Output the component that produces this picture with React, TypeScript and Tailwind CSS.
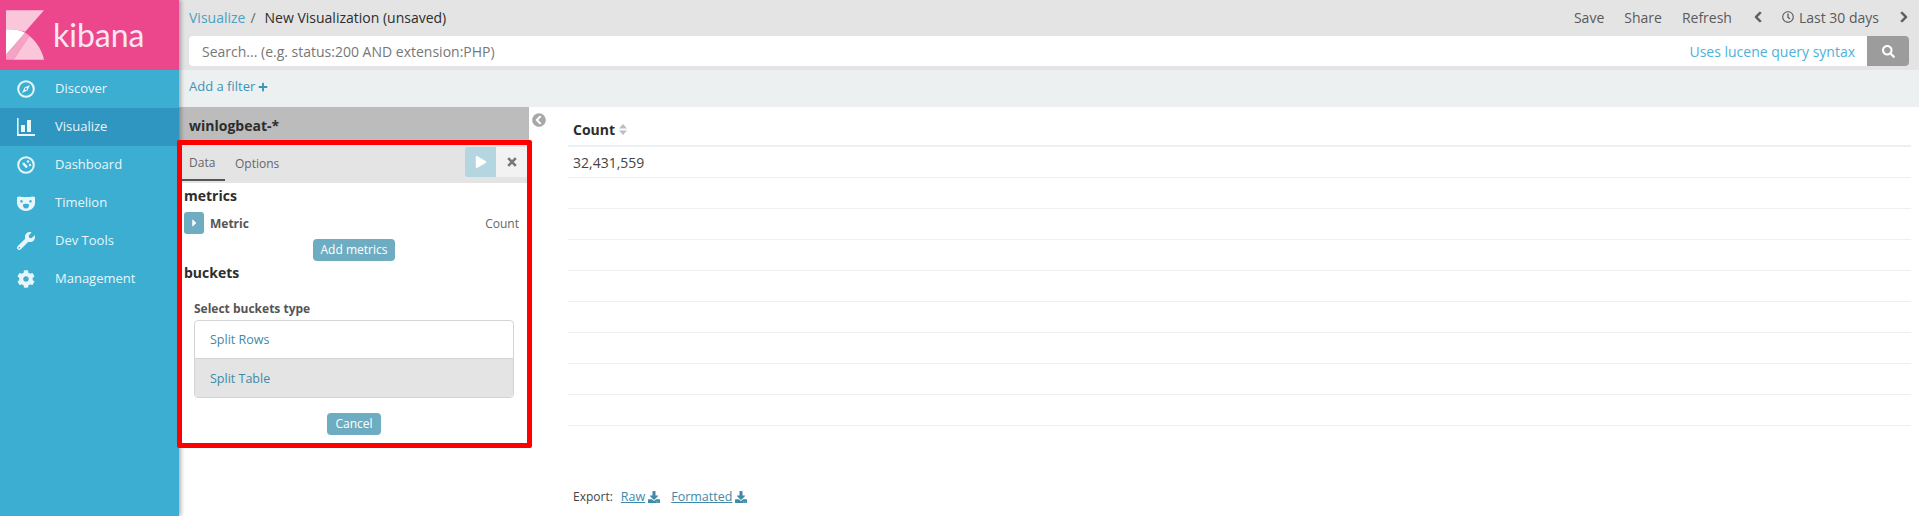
import { FaChevronCircleLeft, FaCaretRight, FaDownload, FaPlay, FaPlus, FaSearch, FaWrench, FaCog, FaRegClock, FaChevronLeft, FaChevronRight } from 'react-icons/fa';

function CompassIcon() {
  return (
    <svg viewBox="0 0 18 18" className="w-[18px] h-[18px]">
      <circle cx="9" cy="9" r="7.8" fill="none" stroke="currentColor" strokeWidth="2" />
      <path d="M13 5 L10.5 10.5 L5 13 L7.5 7.5 Z M9 8 a1 1 0 1 0 .01 0Z" fill="currentColor" fillRule="evenodd" />
    </svg>
  );
}

function ChartIcon() {
  return (
    <svg viewBox="0 0 18 18" className="w-[18px] h-[18px]" fill="currentColor">
      <path d="M0 0h1.6v16H18v2H0Z" />
      <rect x="4" y="7" width="4" height="7" />
      <rect x="10" y="2" width="4" height="12" />
    </svg>
  );
}

function GaugeIcon() {
  return (
    <svg viewBox="0 0 18 18" className="w-[18px] h-[18px]">
      <circle cx="9" cy="9" r="7.8" fill="none" stroke="currentColor" strokeWidth="2" />
      <path d="M6 7 L10 11.5" stroke="currentColor" strokeWidth="2.6" />
      <circle cx="11" cy="5.5" r="1.3" fill="currentColor" />
      <circle cx="13" cy="9" r="1.2" fill="currentColor" />
    </svg>
  );
}

function BearIcon() {
  return (
    <svg viewBox="0 0 18 15" className="w-[18px] h-[15px]" fill="currentColor">
      <path fillRule="evenodd" d="M0 1 C2 .5 3 0 5 1 H13 C15 0 16 .5 18 1 V7 C18 11 14 15 9 15 C4 15 0 11 0 7 Z M4.5 4 a1.3 1.3 0 1 0 .01 0Z M13.5 4 a1.3 1.3 0 1 0 .01 0Z M6 8.5 C7 7.5 11 7.5 12 8.5 C12.5 10.5 11 12.5 9 12.5 C7 12.5 5.5 10.5 6 8.5Z" />
    </svg>
  );
}

function CloseIcon() {
  return (
    <svg viewBox="0 0 10 10" className="w-[10px] h-[10px]">
      <path d="M1.2 1.2 L8.8 8.8 M8.8 1.2 L1.2 8.8" stroke="currentColor" strokeWidth="2.6" />
    </svg>
  );
}

function SortIcon() {
  return (
    <svg viewBox="0 0 8 11" className="ml-[4px] w-[8px] h-[11px] text-[#b8c0c4]" fill="currentColor">
      <path d="M4 0 L8 4.6 H0 Z M4 11 L0 6.4 H8 Z" />
    </svg>
  );
}

const navItems = [
  { label: 'Discover', icon: <CompassIcon /> },
  { label: 'Visualize', icon: <ChartIcon />, active: true },
  { label: 'Dashboard', icon: <GaugeIcon /> },
  { label: 'Timelion', icon: <BearIcon /> },
  { label: 'Dev Tools', icon: <FaWrench className="w-[18px] h-[18px]" /> },
  { label: 'Management', icon: <FaCog className="w-[18px] h-[18px]" /> },
];

function KibanaLogo() {
  return (
    <svg viewBox="0 0 115 150" className="w-[38px] h-[50px]">
      <path d="M0 0H115L58 65C42 60 20 57 0 58Z" fill="#f9c6da" />
      <path d="M0 58C20 57 42 60 58 68L0 135Z" fill="#ffffff" />
      <path d="M58 68C62 70 68 74 71 78L23 150H0V135Z" fill="#f4a3c4" />
      <path d="M71 78C95 98 110 125 115 150H23Z" fill="#f9c6da" />
    </svg>
  );
}

export default function App() {
  return (
    <div className="flex w-[1919px] h-[516px] overflow-hidden bg-white font-['Open_Sans',sans-serif] text-[13px] text-[#444]">
      <aside className="w-[179px] shrink-0 bg-[#3caed2] shadow-[2px_0_4px_rgba(0,0,0,0.3)] z-10">
        <div className="h-[70px] bg-[#ec478c] flex items-center pl-[6px] gap-[9px]">
          <KibanaLogo />
          <span className="font-['Lato',sans-serif] text-[32px] text-[#fde6f0]">kibana</span>
        </div>
        {navItems.map((item) => (
          <div
            key={item.label}
            className={`h-[38px] flex items-center pl-[17px] gap-[20px] text-[#e8f6fa] ${item.active ? 'bg-[#2e96c1]' : ''}`}
          >
            <span className="w-[18px] flex justify-center">{item.icon}</span>
            <span>{item.label}</span>
          </div>
        ))}
      </aside>

      <main className="flex-1 min-w-0 flex flex-col">
        <div className="h-[70px] bg-[#e4e4e4] px-[10px] flex flex-col">
          <div className="h-[34px] mb-[2px] flex items-center text-[14px]">
            <span className="text-[#4da1c0]">Visualize</span>
            <span className="ml-[5px] text-[#666]">/</span>
            <span className="ml-[9px] text-[#2d2d2d]">New Visualization (unsaved)</span>
            <div className="ml-auto flex items-center text-[#5a5a5a]">
              <span>Save</span>
              <span className="ml-[20px]">Share</span>
              <span className="ml-[20px]">Refresh</span>
              <FaChevronLeft className="ml-[21px] w-[10px] h-[12px]" stroke="currentColor" strokeWidth={30} />
              <FaRegClock className="ml-[19px] w-[12px] h-[12px]" />
              <span className="ml-[5px]">Last 30 days</span>
              <FaChevronRight className="ml-[20px] w-[10px] h-[12px]" stroke="currentColor" strokeWidth={30} />
            </div>
          </div>
          <div className="h-[30px] flex rounded-[4px] overflow-hidden bg-white">
            <div className="flex-1 flex items-center pl-[13px] text-[14px] text-[#777]">
              Search... (e.g. status:200 AND extension:PHP)
              <span className="ml-auto mr-[12px] text-[#4eb1d9]">Uses lucene query syntax</span>
            </div>
            <div className="w-[42px] bg-[#9c9c9c] flex items-center justify-center text-white">
              <FaSearch className="w-[13px] h-[13px]" />
            </div>
          </div>
        </div>

        <div className="h-[37px] pb-[3px] bg-[#ecf0f1] flex items-center px-[10px] text-[#3f93b5]">
          Add a filter
          <FaPlus className="ml-[3px] w-[10px] h-[10px]" />
        </div>

        <div className="flex-1 flex min-h-0">
          <div className="w-[350px] shrink-0 flex flex-col">
            <div className="h-[33px] pt-[4px] bg-[#bcbcbc] flex items-center px-[10px] text-[14px] font-bold text-[#2d2d2d]">
              winlogbeat-*
            </div>
            <div className="-ml-[2px] -mr-[3px] border-[5px] border-[#ff0000] rounded-[2px] h-[308px] bg-white z-20 flex flex-col">
              <div className="h-[38px] shrink-0 bg-[#e4e4e4] flex">
                <div className="w-[43px] h-[36px] pl-[7px] pt-[2px] border-b-[2px] border-[#555] flex items-center text-[12px] text-[#666]">Data</div>
                <div className="ml-[10px] h-[36px] pt-[2px] flex items-center text-[12px] text-[#666]">Options</div>
                <div className="ml-auto flex items-start pt-[2px]">
                  <div className="w-[31px] h-[30px] bg-[#b3d6e1] rounded-l-[3px] flex items-center justify-center text-white">
                    <FaPlay className="w-[12px] h-[12px]" />
                  </div>
                  <div className="w-[31px] h-[30px] bg-[#f2f2f2] flex items-center justify-center text-[#777]">
                    <CloseIcon />
                  </div>
                </div>
              </div>

              <div className="px-[2px] flex flex-col">
                <div className="h-[24px] flex items-center text-[14px] font-bold text-[#2d2d2d]">metrics</div>
                <div className="mt-[5px] h-[22px] flex items-center">
                  <div className="w-[20px] h-[22px] bg-[#6eadc1] rounded-[3px] flex items-center justify-center text-white">
                    <FaCaretRight className="w-[9px] h-[12px]" />
                  </div>
                  <span className="ml-[6px] mt-[2px] text-[12px] font-bold text-[#555]">Metric</span>
                  <span className="ml-auto mt-[2px] mr-[6px] text-[12px] text-[#666]">Count</span>
                </div>
                <button className="ml-[129px] mt-[5px] w-[82px] h-[22px] rounded-[4px] bg-[#6eadc1] text-[12px] text-white">Add metrics</button>
                <div className="h-[22px] flex items-center text-[14px] font-bold text-[#2d2d2d]">buckets</div>
              </div>

              <div className="pl-[12px] pr-[13px] flex flex-col">
                <div className="mt-[16px] h-[20px] flex items-center text-[12px] font-bold text-[#555]">Select buckets type</div>
                <div className="mt-[1px] border border-[#d4d4d4] rounded-[4px] overflow-hidden text-[12.5px] text-[#3f8aa8]">
                  <div className="h-[38px] pt-[2px] flex items-center pl-[15px] border-b border-[#d4d4d4]">Split Rows</div>
                  <div className="h-[38px] pt-[2px] flex items-center pl-[15px] bg-[#e4e4e4]">Split Table</div>
                </div>
              </div>

              <button className="ml-[145px] mt-[15px] w-[54px] h-[22px] rounded-[4px] bg-[#6eadc1] text-[12px] text-white">Cancel</button>
            </div>
          </div>

          <div className="w-[39px] shrink-0 flex pl-[3px] pt-[6px] text-[#a8a8a8]">
            <FaChevronCircleLeft className="w-[14px] h-[14px]" />
          </div>

          <div className="flex-1 min-w-0 mr-[8px] flex flex-col">
            <div className="h-[40px] pt-[7px] flex items-center px-[5px] border-b-[2px] border-[#ecf0f1] text-[14px] font-bold text-[#2d2d2d]">
              Count
              <SortIcon />
            </div>
            <div className="h-[31px] flex items-center px-[5px] text-[14px] border-b border-[#ecf0f1]">32,431,559</div>
            {[0, 1, 2, 3, 4, 5, 6, 7].map((i) => (
              <div key={i} className="h-[31px] border-b border-[#ecf0f1]" />
            ))}
            <div className="mt-[62px] px-[5px] flex items-center text-[12.5px]">
              <span className="text-[12px] text-[#444]">Export:</span>
              <span className="ml-[8px] underline text-[#3f8aa8]">Raw</span>
              <FaDownload className="ml-[3px] w-[12px] h-[12px] text-[#3f8aa8]" />
              <span className="ml-[11px] underline text-[#3f8aa8]">Formatted</span>
              <FaDownload className="ml-[3px] w-[12px] h-[12px] text-[#3f8aa8]" />
            </div>
          </div>
        </div>
      </main>
    </div>
  );
}
